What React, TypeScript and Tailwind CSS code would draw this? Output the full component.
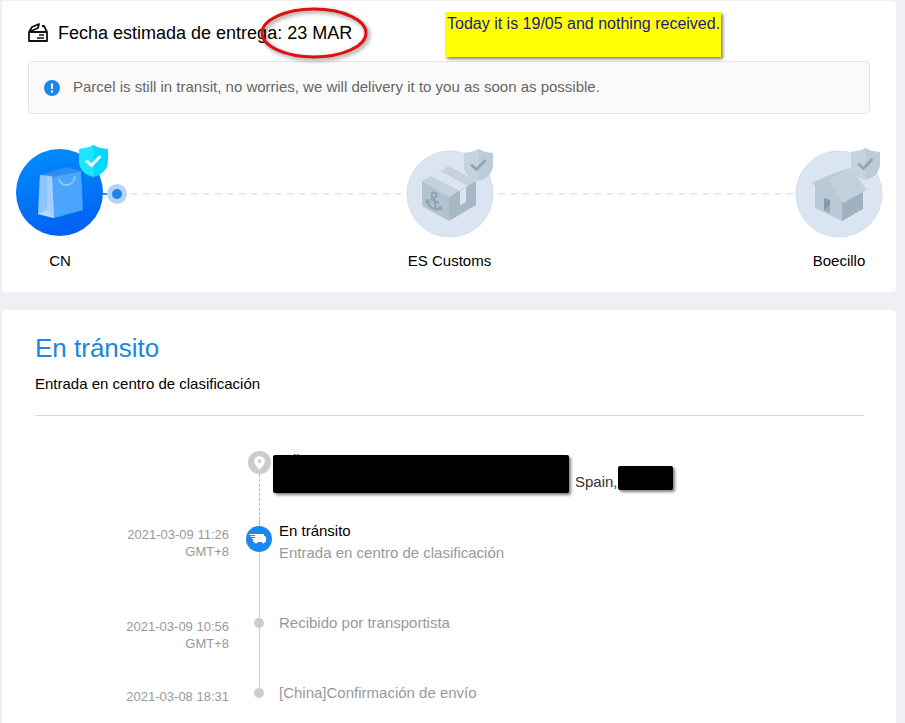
import type { ReactNode } from "react";

function Shield({ active, x, y }: { active?: boolean; x: number; y: number }) {
  return (
    <g transform={`translate(${x} ${y})`}>
      <path d="M14.500 0C18 2.500 23 3.500 29 4V16C29 25 22 30 14.500 32C7 30 0 25 0 16V4C6 3.500 11 2.500 14.500 0Z" fill={active ? "#00d9fb" : "#bccbd8"} />
      <path d="M14.500 0C11 2.500 6 3.500 0 4V16C0 25 7 30 14.500 32Z" fill={active ? "#1be6fd" : "#c5d3e0"} />
      <path d="M7 15.500L12.500 20.500L21.500 11" fill="none" stroke={active ? "#ffffff" : "#94a5b5"} strokeWidth="3" />
    </g>
  );
}

function BagArt() {
  return (
    <svg className="block h-[88px] w-[88px] overflow-visible" viewBox="0 0 88 88" aria-hidden="true">
      <defs>
        <linearGradient id="bagDisc" x1="0.4" y1="0" x2="0.6" y2="1">
          <stop offset="0" stopColor="#008cfc" />
          <stop offset="1" stopColor="#0060f2" />
        </linearGradient>
      </defs>
      <circle cx="43.5" cy="43.5" r="43.5" fill="url(#bagDisc)" />
      <path d="M24 26L51 18L65 22L38 28Z" fill="#2c8df5" />
      <path d="M24 26L36 28L65 22L67 61L38 69L22 65Z" fill="#4ba4fd" />
      <path d="M24 26L36 27L38 69L22 65Z" fill="#8cc6ff" />
      <path d="M31 28L36 27L38 69L31 61Z" fill="#a9cefb" />
      <path d="M22 65L31 61L38 69Z" fill="#b9dafd" />
      <path d="M43 30C45 39 58 38 59 27" fill="none" stroke="#8cc6ff" strokeWidth="2" />
      <Shield active x={63} y={-4} />
    </svg>
  );
}

function BoxArt() {
  return (
    <svg className="block h-[88px] w-[88px] overflow-visible" viewBox="0 0 88 88" aria-hidden="true">
      <circle cx="44" cy="45" r="43" fill="#dae5f1" stroke="#d0deed" />
      <path d="M16 32L43 17L70 32L43 48Z" fill="#c5d2de" />
      <path d="M25 27L34 22L62 37L54 42Z" fill="#dae5f1" />
      <path d="M16 32L43 48V72L16 57Z" fill="#b2c2cf" />
      <path d="M43 48L70 32V56L43 72Z" fill="#a6b7c5" />
      <path d="M54 42L60 38V53L54 56Z" fill="#dae5f1" />
      <g fill="none" stroke="#8fa3b4" strokeWidth="2">
        <circle cx="28" cy="46" r="2.500" />
        <path d="M28 49L30 60M24 50L33 54M21 51C22 58 31 64 35 58M20 54L21 51L24 53M32 59L35 58L36 61" />
      </g>
      <Shield x={58} y={0} />
    </svg>
  );
}

function HouseArt() {
  return (
    <svg className="block h-[88px] w-[88px] overflow-visible" viewBox="0 0 88 88" aria-hidden="true">
      <circle cx="44" cy="45" r="43" fill="#dae5f1" stroke="#d0deed" />
      <path d="M20 35L34 30L47 52V72L20 59Z" fill="#b9c9d5" />
      <path d="M47 53L68 42V60L47 72Z" fill="#9fb1c0" />
      <path d="M34 31L55 19L72 41L48 54Z" fill="#c2d0dc" />
      <path d="M17 34L37 25L55 19L34 31L18 36Z" fill="#b9c9d6" />
      <path d="M29 49L35 51V64L29 61Z" fill="#8498a9" />
      <path d="M29 61L35 56V64Z" fill="#9bacba" />
      <Shield x={56} y={-1} />
    </svg>
  );
}

function Connector({ current }: { current?: boolean }) {
  return (
    <div className="flex h-[90px] min-w-0 flex-1 items-center">
      {current && (
        <>
          <div className="-ml-px h-0.5 w-1 bg-[#2a8ae0]" />
          <div className="flex size-5 shrink-0 items-center justify-center rounded-full bg-[#b5d3f3]">
            <div className="size-2.5 rounded-full bg-[#1d86e6]" />
          </div>
        </>
      )}
      <svg className="h-0.5 min-w-0 flex-1" aria-hidden="true">
        <line x1="4" y1="1" x2="100%" y2="1" stroke="#ebecee" strokeWidth="2" strokeDasharray="7 5" />
      </svg>
    </div>
  );
}

function Step({ label, children }: { label: string; children: ReactNode }) {
  return (
    <div className="flex w-[88px] shrink-0 flex-col items-center gap-3.5">
      {children}
      <span className="text-[15px] leading-5 whitespace-nowrap">{label}</span>
    </div>
  );
}

function Row({ date, zone, lead, marker, tail, height, children }: {
  date?: string;
  zone?: string;
  lead?: string;
  marker: ReactNode;
  tail?: string;
  height: string;
  children: ReactNode;
}) {
  return (
    <li className={`flex ${height}`}>
      <div className="w-[194px] shrink-0 pt-1.5 text-right text-[13px] leading-[17px] text-[#999]">
        {date && <p>{date}</p>}
        {zone && <p>{zone}</p>}
      </div>
      <div className="flex w-[50px] shrink-0 flex-col items-center pl-2.5">
        <div className={`h-1.5 border-l ${lead ?? "border-transparent"}`} />
        {marker}
        {tail && <div className={`flex-1 border-l ${tail}`} />}
      </div>
      <div className="min-w-0 flex-1 text-[15px] leading-[22px]">{children}</div>
    </li>
  );
}

const dot = <div className="size-2.5 shrink-0 rounded-full bg-[#ccc]" />;

export default function App() {
  return (
    <main className="flex min-h-screen flex-col gap-[18px] bg-[#eff0f4] pt-px pr-[9px] pl-0.5 font-['Liberation_Sans',Arial,sans-serif] text-black">
      <section className="relative rounded bg-white px-[26px] pt-5 pb-[21px]">
        <header className="flex h-6 items-center gap-2.5">
          <svg className="size-5" viewBox="0 0 20 20" fill="none" stroke="#111" strokeWidth="1.800" strokeLinejoin="round" aria-hidden="true">
            <path d="M1 9H19V18H1ZM1 9L4 4L11 1L10 5L1 9M14 3H16L19 9" />
            <path d="M11 12H16M9 15H16" strokeWidth="1.500" />
          </svg>
          <h1 className="text-[18px] leading-6">Fecha estimada de entrega: 23 MAR</h1>
        </header>

        <div className="mt-4 flex h-[53px] items-center gap-[13px] rounded border border-[#e5e5e5] bg-[#fafafa] px-[15px] text-[15px] text-[#666]">
          <svg className="size-4" viewBox="0 0 16 16" aria-hidden="true">
            <circle cx="8" cy="8" r="8" fill="#1d86e6" />
            <path d="M8 3.500V9M8 10.500V12.500" stroke="#fff" strokeWidth="2" />
          </svg>
          <p>Parcel is still in transit, no worries, we will delivery it to you as soon as possible.</p>
        </div>

        <div className="-mr-[13px] -ml-3 mt-[35px] flex">
          <Step label="CN"><BagArt /></Step>
          <Connector current />
          <Step label="ES Customs"><BoxArt /></Step>
          <Connector />
          <Step label="Boecillo"><HouseArt /></Step>
        </div>

        <svg className="absolute top-1 left-[256px] h-[58px] w-[112px] overflow-visible drop-shadow-[2px_2px_2px_rgba(0,0,0,0.45)]" viewBox="0 0 112 58" aria-hidden="true">
          <ellipse cx="56" cy="28" rx="52" ry="24" fill="none" stroke="#e01010" strokeWidth="3" />
        </svg>
        <p className="absolute top-[11px] left-[443px] h-[45px] w-[276px] bg-[#ffff05] pl-0.5 text-base leading-6 whitespace-nowrap text-[#1c1c80] shadow-[2px_2px_3px_rgba(0,0,0,0.5)]">
          Today it is 19/05 and nothing received.
        </p>
      </section>

      <section className="flex-1 rounded-t bg-white pt-[22px] pr-8 pl-[33px]">
        <h2 className="text-[26px] leading-8 text-[#1d86e0]">En tránsito</h2>
        <p className="mt-2.5 text-[15px] leading-5">Entrada en centro de clasificación</p>
        <hr className="mt-[21px] border-[#d8d8d8]" />

        <ol className="mt-[29px]">
          <Row
            height="h-[75px]"
            tail="border-dashed border-[#bbb]"
            marker={
              <svg className="size-[23px] shrink-0" viewBox="0 0 24 24" aria-hidden="true">
                <circle cx="12" cy="12" r="12" fill="#ccc" />
                <path d="M12 5.500C8.500 5.500 6.500 8 6.500 10.700C6.500 14 12 19.500 12 19.500S17.500 14 17.500 10.700C17.500 8 15.500 5.500 12 5.500Z" fill="#fff" />
                <circle cx="12" cy="10.500" r="2" fill="#ccc" />
              </svg>
            }
          >
            <div className="relative -ml-1.5 flex items-start pt-2.5 text-[#333]">
              <span className="absolute top-1 left-5">ll</span>
              <div className="relative h-[38px] w-[296px] rounded-xs bg-black shadow-[2px_2px_3px_rgba(0,0,0,0.5)]" />
              <span className="mt-4 ml-1.5">Spain,</span>
              <div className="mt-[11px] h-6 w-[55px] rounded-xs bg-black shadow-[2px_2px_3px_rgba(0,0,0,0.5)]" />
            </div>
          </Row>
          <Row
            height="h-[92px]"
            date="2021-03-09 11:26"
            zone="GMT+8"
            lead="border-dashed border-[#bbb]"
            tail="border-[#ccc]"
            marker={
              <svg className="size-[26px] shrink-0" viewBox="0 0 26 26" aria-hidden="true">
                <circle cx="13" cy="13" r="13" fill="#1a88f0" />
                <path d="M9 8H18V10H19L20 11.500V16H18.800A1.500 1.500 0 0 1 15.800 16H11.500A1.500 1.500 0 0 1 8.500 16H7V13H9Z" fill="#fff" />
                <path d="M3.500 8.500H9M4.500 10.500H9M6 12.500H9" stroke="#fff" strokeWidth="1.200" />
              </svg>
            }
          >
            <p>En tránsito</p>
            <p className="text-[#999]">Entrada en centro de clasificación</p>
          </Row>
          <Row height="h-[70px]" date="2021-03-09 10:56" zone="GMT+8" lead="border-[#ccc]" tail="border-[#ccc]" marker={dot}>
            <p className="text-[#999]">Recibido por transportista</p>
          </Row>
          <Row height="h-10" date="2021-03-08 18:31" lead="border-[#ccc]" marker={dot}>
            <p className="text-[#999]">[China]Confirmación de envío</p>
          </Row>
        </ol>
      </section>
    </main>
  );
}
